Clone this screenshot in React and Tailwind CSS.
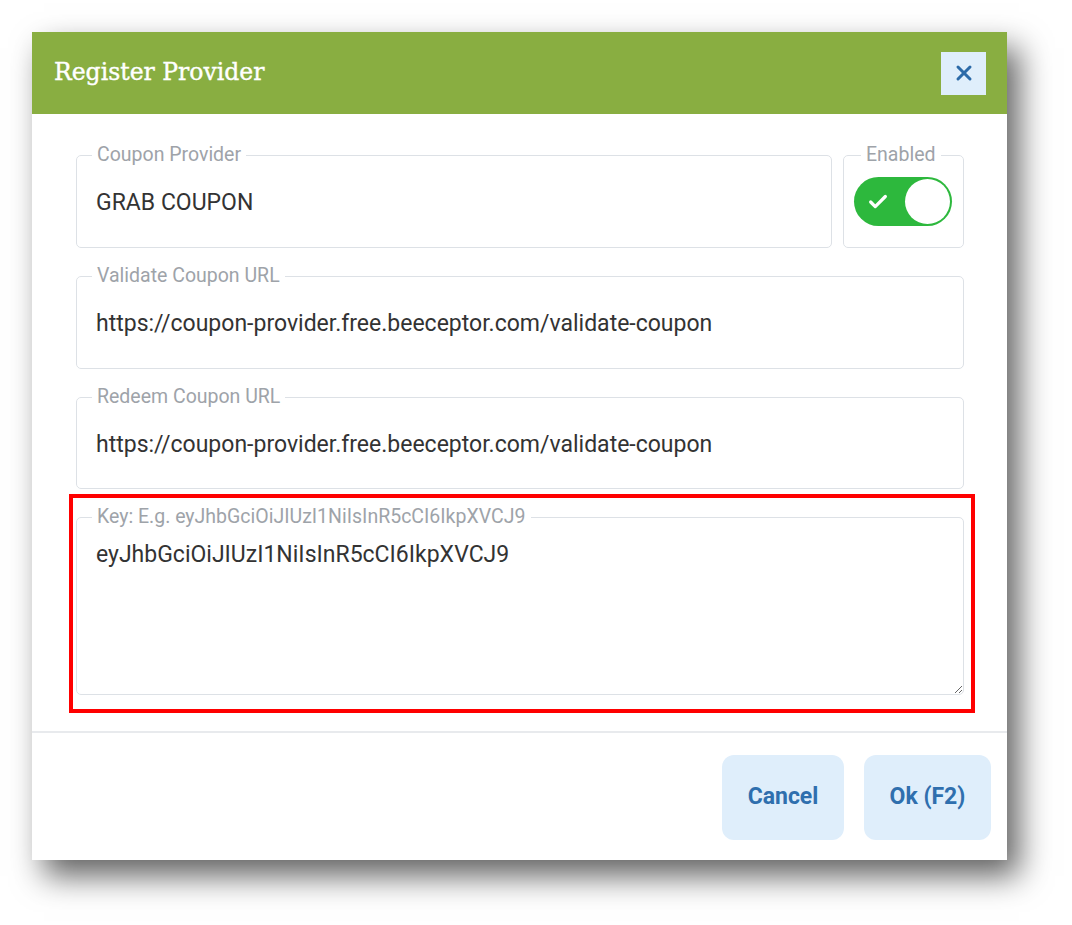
import { X, Check } from 'lucide-react'

function Field({ label, children, className = '', legendClass = 'ml-[-4px]' }) {
  return (
    <fieldset className={`border border-[#dde1e6] rounded-[5px] ${className}`}>
      <legend className={`px-[5px] text-[19.5px] leading-6 text-[#9ea3a9] ${legendClass}`}>{label}</legend>
      {children}
    </fieldset>
  )
}

export default function App() {
  return (
    <div className="min-h-[925px] bg-white pt-8 pl-8" style={{ fontFamily: 'Roboto, "Noto Sans", sans-serif' }}>
      <div className="w-[975px] h-[828px] bg-white flex flex-col shadow-[12px_16px_30px_rgba(0,0,0,0.62)]">
        <div className="h-[82px] bg-[#89ae41] flex items-center justify-between pl-[22px] pr-[21px] shrink-0">
          <h1 className="text-white text-[23.5px] font-normal [-webkit-text-stroke:0.4px_white]" style={{ fontFamily: '"DejaVu Serif", "Liberation Serif", serif' }}>
            Register Provider
          </h1>
          <button className="w-[45px] h-[43px] bg-[#dfeefb] flex items-center justify-center text-[#2b6aa8]">
            <X size={24} strokeWidth={3} />
          </button>
        </div>

        <div className="flex-1 pr-[43px] pl-[44px] pt-[29px] pb-[36px] flex flex-col gap-4 border-b-2 border-[#e8eaed]">
          <div className="flex gap-[11px]">
            <Field label="Coupon Provider" className="flex-1 px-[19px] pt-[22px] pb-[30px]">
              <div className="text-[23px] leading-7 text-[#333]">GRAB COUPON</div>
            </Field>
            <Field label="Enabled" legendClass="ml-[7px]" className="w-[121px] pl-[10px] pr-[11px] pt-[10px] pb-[20px]">
              <div className="w-[98px] h-[49px] rounded-full bg-[#2db83d] flex items-center justify-between pl-[13px] pr-[2px]">
                <Check size={22} strokeWidth={3.5} className="text-white" />
                <div className="w-[45px] h-[45px] rounded-full bg-white" />
              </div>
            </Field>
          </div>

          <Field label="Validate Coupon URL" className="px-[19px] pt-[22px] pb-[30px]">
            <div className="text-[23px] leading-7 text-[#333]">https://coupon-provider.free.beeceptor.com/validate-coupon</div>
          </Field>

          <Field label="Redeem Coupon URL" className="px-[19px] pt-[22px] pb-[29px]">
            <div className="text-[23px] leading-7 text-[#333]">https://coupon-provider.free.beeceptor.com/validate-coupon</div>
          </Field>

          <div className="relative">
            <Field label="Key: E.g. eyJhbGciOiJIUzI1NiIsInR5cCI6IkpXVCJ9" legendClass="ml-[15px]">
              <textarea
                defaultValue="eyJhbGciOiJIUzI1NiIsInR5cCI6IkpXVCJ9"
                className="block w-full h-[165px] px-[19px] pt-[12px] text-[23px] leading-7 text-[#333] outline-none resize-y bg-transparent"
              />
            </Field>
            <div className="absolute left-[-7px] right-[-11px] top-[-11px] bottom-[-18px] border-[4px] border-[#ff0000] pointer-events-none" />
          </div>
        </div>

        <div className="h-[127px] shrink-0 flex justify-end items-start gap-5 pt-[22px] pr-4">
          <button className="w-[122px] h-[85px] rounded-[12px] bg-[#dfeefb] text-[#2f6fae] text-[23px] font-bold">Cancel</button>
          <button className="w-[127px] h-[85px] rounded-[12px] bg-[#dfeefb] text-[#2f6fae] text-[23px] font-bold">Ok (F2)</button>
        </div>
      </div>
    </div>
  )
}
